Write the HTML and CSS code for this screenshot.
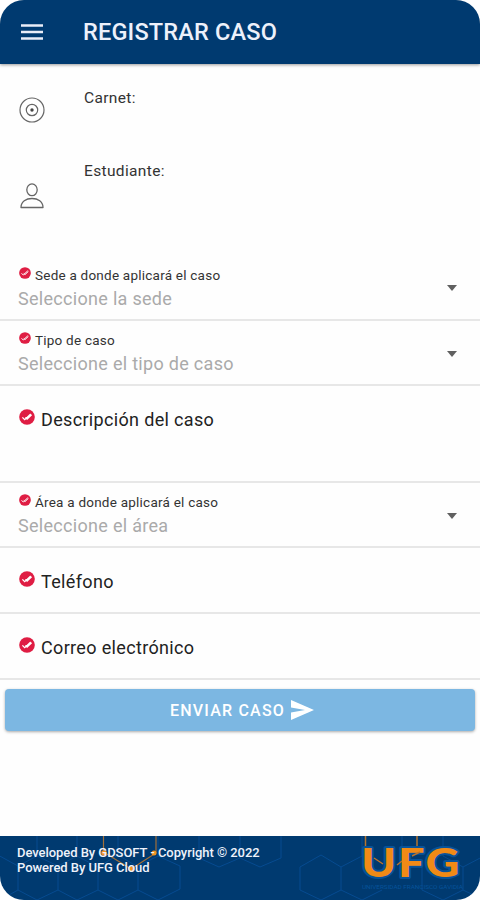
FILE: index.html
```html
<!DOCTYPE html>
<html lang="es">
<head>
<meta charset="utf-8">
<title>Registrar caso</title>
<link rel="stylesheet" href="styles.css">
</head>
<body>
<svg width="0" height="0" class="defs">
  <symbol id="check" viewBox="0 0 16 16"><circle cx="8" cy="8" r="7.8" fill="#df1d43"/><path d="M3.4 8.400l2.300 2.300 6-5.700M6.300 8.600l1.800 1.500 4.500-4.300" fill="none" stroke="#fff" stroke-width="1.300"/></symbol>
</svg>
<div class="app">
  <header class="bar">
    <svg class="menu" width="22" height="16" viewBox="0 0 22 16"><path d="M0 1.500h22M0 8h22M0 14.500h22" stroke="#e9edf8" stroke-width="2.600"/></svg>
    <h1 class="title">REGISTRAR CASO</h1>
  </header>
  <main class="form">
    <section class="info carnet">
      <svg class="info-icon" width="26" height="26" viewBox="0 0 26 26" fill="none" stroke="#666" stroke-width="1.200"><circle cx="13" cy="13" r="12"/><circle cx="13" cy="13" r="5.700"/><circle cx="13" cy="13" r="1.700" fill="#444" stroke="none"/></svg>
      <span class="info-text">Carnet:</span>
    </section>
    <section class="info estudiante">
      <svg class="info-icon" width="26" height="26" viewBox="0 0 26 26" fill="none" stroke="#666" stroke-width="1.300"><ellipse cx="13" cy="6.800" rx="5.200" ry="5.900"/><path d="M2 24.500C2 18.700 7 15.500 13 15.500s11 3.200 11 9z" stroke-linejoin="round"/></svg>
      <span class="info-text">Estudiante:</span>
    </section>
    <section class="row select first">
      <div class="label"><svg class="check"><use href="#check"/></svg><span>Sede a donde aplicará el caso</span></div>
      <div class="placeholder">Seleccione la sede</div>
      <i class="caret"></i>
    </section>
    <section class="row select">
      <div class="label"><svg class="check"><use href="#check"/></svg><span>Tipo de caso</span></div>
      <div class="placeholder">Seleccione el tipo de caso</div>
      <i class="caret"></i>
    </section>
    <section class="row field tall"><svg class="check"><use href="#check"/></svg><span>Descripción del caso</span></section>
    <section class="row select">
      <div class="label"><svg class="check"><use href="#check"/></svg><span>Área a donde aplicará el caso</span></div>
      <div class="placeholder">Seleccione el área</div>
      <i class="caret"></i>
    </section>
    <section class="row field"><svg class="check"><use href="#check"/></svg><span>Teléfono</span></section>
    <section class="row field"><svg class="check"><use href="#check"/></svg><span>Correo electrónico</span></section>
    <button class="send"><span>ENVIAR CASO</span><svg width="23" height="20" viewBox="0 0 23 20"><path d="M0 0L23 10 0 20V12.500L14 10 0 7.500z" fill="#fff"/></svg></button>
  </main>
  <footer class="foot">
    <svg class="pattern" width="480" height="64" viewBox="0 0 480 64" fill="none">
      <path d="M-4 18L18 30M37 0V20L18 30V54L37 64M18 54L0 64M77 0V20L98 31V54L118 64M77 20L58 30V54L37 64M58 54L77 64L98 54M58 30L37 20M118 0V19L98 31M118 19L138 31V54L158 64L180 53V30L158 20L138 30M138 54L118 64M158 20V0M199 0V22L219 31L240 22V0M281 0V22L260 31L240 22M300 31L321 19L341 31V54L321 64L300 54zM341 31L362 20V0M341 54L362 64L382 54M402 0V20L422 31V54L443 64L463 54V31L443 20V0M463 31L484 20M463 54L484 64" stroke="#064b90" stroke-width="1"/>
      <path d="M103.500 0V16L131 33L156 17V0" stroke="#a17039" stroke-width="1.200"/>
      <g fill="#f39420"><circle cx="104" cy="17" r="2.800"/><circle cx="131" cy="33" r="2.800"/><circle cx="154" cy="17" r="2.500"/></g>
      <path d="M365.500 0V16M417 0V14" stroke="#b4752e" stroke-width="1.500"/>
    </svg>
    <p class="credits">Developed By GDSOFT - Copyright © 2022<br>Powered By UFG Cloud</p>
    <svg class="logo" width="110" height="60" viewBox="0 0 110 60">
      <text class="brand" x="4.500 36 59.500" y="41.500" transform="scale(1.17 1)">UFG</text>
      <path d="M18 22l9 6M41 29l5-4M56 20l8-4" stroke="#b9732d" stroke-width="1.500"/>
      <text class="brand-name" x="6" y="53" textLength="101" lengthAdjust="spacingAndGlyphs">UNIVERSIDAD FRANCISCO GAVIDIA</text>
    </svg>
  </footer>
</div>
</body>
</html>
```
FILE: styles.css
```css
* { box-sizing: border-box; }
body { margin: 0; background: #fff; font-family: Roboto, sans-serif; color: #222; }
.defs { position: absolute; }
.app { width: 480px; height: 900px; display: flex; flex-direction: column; background: #fefefe; border-radius: 24px; overflow: hidden; }
.bar { height: 64px; flex: none; background: #003a70; display: flex; align-items: center; padding-left: 21px; box-shadow: 0 1px 3px #0006; }
.menu { margin-right: 40px; }
.title { margin: 0; font-size: 23.5px; font-weight: 500; color: #edf1fb; line-height: 26px; letter-spacing: .18px; }
.form { flex: 1; }
.info { display: flex; padding-left: 19px; gap: 39px; }
.carnet { height: 73px; padding-top: 24px; }
.carnet .info-icon { margin-top: 9px; }
.estudiante { height: 118px; padding-top: 24px; }
.estudiante .info-icon { margin-top: 22px; }
.info-text { font-size: 15.5px; line-height: 20px; letter-spacing: .35px; color: #333; }
.row { position: relative; border-bottom: 2px solid #e7e7e7; }
.select { height: 65px; padding: 9px 18px 0; }
.select.first { height: 66px; padding-top: 10px; }
.label { display: flex; gap: 4px; font-size: 13.5px; line-height: 20px; letter-spacing: .23px; padding-left: 1px; color: #333; }
.label .check { width: 12px; height: 12px; margin-top: 2px; }
.placeholder { font-size: 18px; line-height: 24px; letter-spacing: .3px; color: #aaa; margin-top: 2px; }
.caret { position: absolute; right: 23px; top: 30px; border: 5.5px solid transparent; border-top: 6px solid #606060; border-bottom: 0; }
.field { height: 66px; display: flex; gap: 6px; padding: 22px 19px 0; font-size: 18px; line-height: 24px; letter-spacing: .34px; }
.field .check { width: 16px; height: 16px; margin-top: 1px; }
.tall { height: 97px; }
.send { width: 470px; height: 42px; margin: 9px 5px 0; border: 0; border-radius: 4px; background: #7cb7e2; color: #fff; box-shadow: 0 1px 3px #0005; display: flex; align-items: center; justify-content: center; gap: 6px; padding: 0 0 0 4px; font: 500 16px Roboto, sans-serif; letter-spacing: 1.2px; }
.foot { position: relative; height: 64px; flex: none; background: #003a70; display: flex; justify-content: space-between; }
.pattern { position: absolute; inset: 0; }
.credits { position: relative; margin: 9px 0 0 17px; font-size: 13px; font-weight: 500; line-height: 15px; letter-spacing: -.05px; color: #eef2fb; }
.logo { position: relative; margin-right: 14px; }
.brand { font: 900 40px Lato, sans-serif; fill: #f08a16; stroke: #07539a; stroke-width: 4px; stroke-linejoin: round; paint-order: stroke; }
.brand-name { font: 5px Roboto, sans-serif; fill: #07539a; }
```
